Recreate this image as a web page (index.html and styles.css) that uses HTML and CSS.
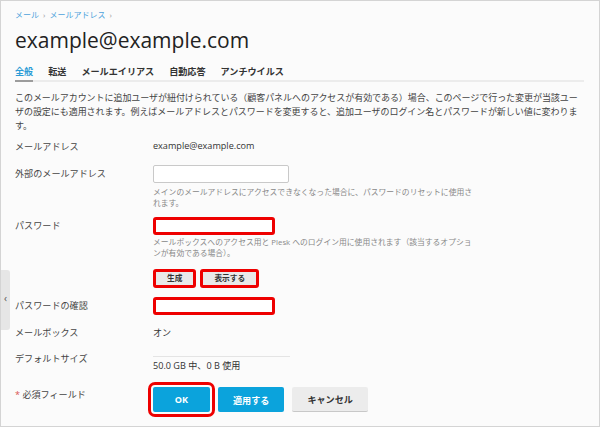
FILE: index.html
```html
<!DOCTYPE html>
<html lang="ja">

<head>
    <meta charset="UTF-8">
    <meta name="viewport" content="width=device-width, initial-scale=1.0">
    <title>example@example.com</title>
    <link rel="stylesheet" href="styles.css">
</head>

<body>
    <div class="frame">
        <div class="side-handle">&lsaquo;</div>

        <div class="page">
            <nav class="crumbs">
                <a href="#">メール</a><span class="sep">&rsaquo;</span><a href="#">メールアドレス</a><span class="sep">&rsaquo;</span>
            </nav>

            <h1 class="title">example@example.com</h1>

            <ul class="tabs">
                <li class="active">全般</li>
                <li>転送</li>
                <li>メールエイリアス</li>
                <li>自動応答</li>
                <li>アンチウイルス</li>
            </ul>

            <p class="intro">このメールアカウントに追加ユーザが紐付けられている（顧客パネルへのアクセスが有効である）場合、このページで行った変更が当該ユー<br>ザの設定にも適用されます。例えばメールアドレスとパスワードを変更すると、追加ユーザのログイン名とパスワードが新しい値に変わりま<br>す。</p>

            <div class="form">
                <div class="row row-address">
                    <div class="label">メールアドレス</div>
                    <div class="field value">example@example.com</div>
                </div>

                <div class="row row-external">
                    <div class="label">外部のメールアドレス</div>
                    <div class="field">
                        <input class="input" type="text">
                        <div class="help">メインのメールアドレスにアクセスできなくなった場合に、パスワードのリセットに使用されます。</div>
                    </div>
                </div>

                <div class="row row-password">
                    <div class="label">パスワード</div>
                    <div class="field">
                        <input class="input marked" type="password">
                        <div class="help help-tight">メールボックスへのアクセス用と Plesk へのログイン用に使用されます（該当するオプションが有効である場合）。</div>
                    </div>
                </div>

                <div class="row row-tools">
                    <div class="label"></div>
                    <div class="field tools">
                        <button class="btn-small" type="button">生成</button>
                        <button class="btn-small" type="button">表示する</button>
                    </div>
                </div>

                <div class="row row-confirm">
                    <div class="label">パスワードの確認</div>
                    <div class="field">
                        <input class="input marked" type="password">
                    </div>
                </div>

                <div class="row row-mailbox">
                    <div class="label">メールボックス</div>
                    <div class="field value">オン</div>
                </div>

                <div class="row row-size">
                    <div class="label">デフォルトサイズ</div>
                    <div class="field">
                        <div class="usage-bar"></div>
                        <div class="usage-text">50.0 GB 中、0 B 使用</div>
                    </div>
                </div>

                <div class="row row-actions">
                    <div class="label required"><span class="star">*</span> 必須フィールド</div>
                    <div class="field actions">
                        <button class="btn btn-primary btn-ok" type="button">OK</button>
                        <button class="btn btn-primary" type="button">適用する</button>
                        <button class="btn btn-cancel" type="button">キャンセル</button>
                    </div>
                </div>
            </div>
        </div>
    </div>
</body>

</html>
```

FILE: styles.css
```css
* {
    box-sizing: border-box;
}

html,
body {
    margin: 0;
}

body {
    font-family: "Open Sans", "Noto Sans CJK JP", sans-serif;
    color: #333;
    background: #fff;
}

.frame {
    position: relative;
    width: 600px;
    height: 427px;
    border: 1px solid #d4d4d4;
    background: #fbfbfb;
    overflow: hidden;
}

/* collapse handle of the left navigation */
.side-handle {
    position: absolute;
    left: 0;
    top: 269px;
    width: 9px;
    height: 60px;
    background: #e6e6e6;
    border-radius: 0 3px 3px 0;
    color: #555;
    font-size: 10px;
    line-height: 56px;
    text-align: center;
}

.page {
    padding: 8px 15px 0 14px;
}

.crumbs {
    font-size: 8px;
    line-height: 12px;
}

.crumbs a {
    color: #4ea3db;
    text-decoration: none;
}

.crumbs .sep {
    color: #9a9a9a;
    margin: 0 4px;
}

.title {
    margin: 6px 0 0;
    font-size: 21px;
    font-weight: 400;
    line-height: 26px;
    color: #222;
}

.tabs {
    display: flex;
    gap: 15px;
    list-style: none;
    margin: 13px 0 0;
    padding: 0;
    border-bottom: 2px solid #ececec;
    font-size: 9.1px;
    font-weight: 600;
    line-height: 12px;
    color: #333;
}

.tabs li {
    padding-bottom: 2px;
    margin-bottom: -2px;
    border-bottom: 2px solid transparent;
}

.tabs li.active {
    color: #2b9bd6;
    border-bottom-color: #9c9c9c;
}

.intro {
    margin: 9px 0 0;
    font-size: 9px;
    letter-spacing: -0.05px;
    line-height: 14px;
    color: #444;
}

/* form rows */
.row {
    display: grid;
    grid-template-columns: 138px 1fr;
    align-items: start;
}

.label {
    font-size: 9.1px;
    line-height: 18px;
    color: #444;
}

.value {
    font-size: 9.1px;
    line-height: 15px;
    color: #333;
}

.row-address { margin-top: 5px; }
.row-external { margin-top: 9px; }
.row-password { margin-top: 8px; }
.row-tools { margin-top: 10px; }
.row-confirm { margin-top: 9px; }
.row-mailbox { margin-top: 9px; }
.row-size { margin-top: 8px; }
.row-actions { margin-top: 15px; }

.row-mailbox .value {
    line-height: 17px;
}

.input {
    display: block;
    width: 136px;
    height: 18px;
    margin: 0;
    border: 1px solid #c9c9c9;
    border-radius: 2px;
    background: #fff;
}

/* highlighted fields */
.input.marked {
    width: 122px;
    border: 3px solid #ee0000;
    border-radius: 3px;
}

.help {
    max-width: 320px;
    margin-top: 4px;
    font-size: 7.8px;
    line-height: 11px;
    color: #888;
}

.help-tight {
    margin-top: 2px;
}

.tools {
    display: flex;
    gap: 4px;
}

.btn-small {
    height: 19px;
    padding: 0 11px;
    border: 3px solid #ee0000;
    border-radius: 3px;
    background: #e9e9e9;
    font-family: inherit;
    font-size: 7.7px;
    font-weight: 700;
    color: #333;
    line-height: 13px;
}

.usage-bar {
    width: 137px;
    height: 1px;
    margin-top: 6px;
    background: #e4e4e4;
}

.usage-text {
    margin-top: 3px;
    font-size: 9.1px;
    line-height: 12px;
    color: #333;
}

.required {
    line-height: 16px;
}

.required .star {
    color: #d9534f;
}

.actions {
    display: flex;
    gap: 8px;
}

.btn {
    min-width: 57px;
    height: 25px;
    padding: 0 15px;
    border: 0;
    border-radius: 2px;
    font-family: inherit;
    font-size: 9.1px;
    font-weight: 700;
}

.btn-primary {
    background: #0ba3dc;
    color: #fff;
}

.btn-ok {
    outline: 3px solid #ee0000;
    outline-offset: 2px;
}

.btn-cancel {
    background: #ececec;
    border-bottom: 1px solid #c8c8c8;
    color: #333;
}
```
